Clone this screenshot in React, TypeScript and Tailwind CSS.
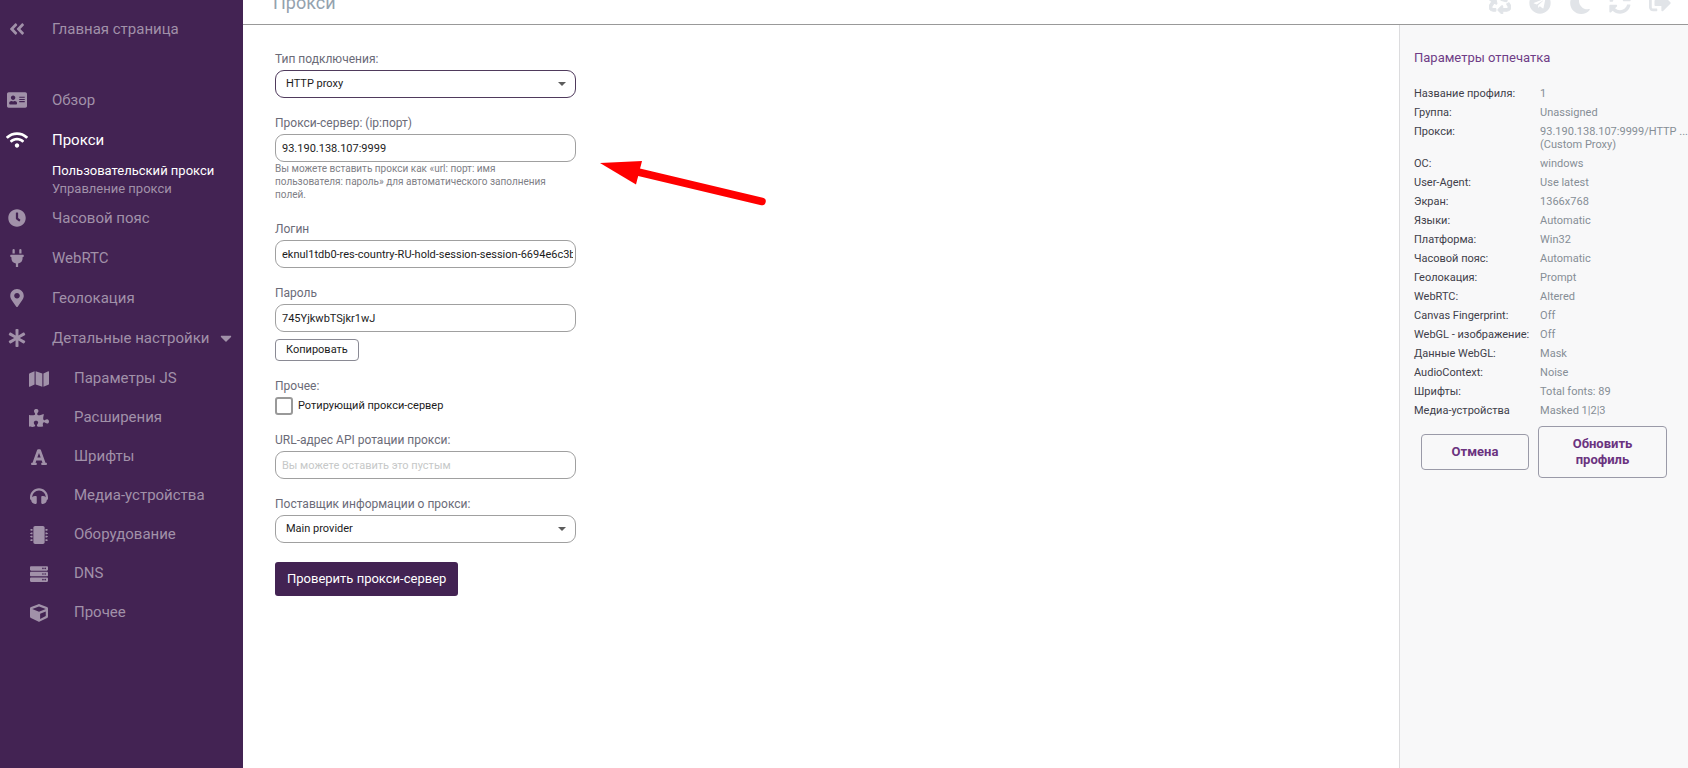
import { useState } from 'react';
import type { ReactNode } from 'react';
import type { IconType } from 'react-icons';
import {
  FaAddressCard,
  FaAngleDoubleLeft,
  FaAsterisk,
  FaCaretDown,
  FaClock,
  FaCube,
  FaFont,
  FaHeadphones,
  FaMap,
  FaMapMarkerAlt,
  FaMicrochip,
  FaMoon,
  FaPlug,
  FaPuzzlePiece,
  FaRecycle,
  FaServer,
  FaSignOutAlt,
  FaSyncAlt,
  FaTelegram,
  FaWifi,
} from 'react-icons/fa';

const subItems: { icon: IconType; label: string; wide?: boolean }[] = [
  { icon: FaMap, label: 'Параметры JS', wide: true },
  { icon: FaPuzzlePiece, label: 'Расширения', wide: true },
  { icon: FaFont, label: 'Шрифты' },
  { icon: FaHeadphones, label: 'Медиа-устройства' },
  { icon: FaMicrochip, label: 'Оборудование' },
  { icon: FaServer, label: 'DNS' },
  { icon: FaCube, label: 'Прочее' },
];

const fingerprint: [string, string[]][] = [
  ['Название профиля:', ['1']],
  ['Группа:', ['Unassigned']],
  ['Прокси:', ['93.190.138.107:9999/HTTP ...', '(Custom Proxy)']],
  ['ОС:', ['windows']],
  ['User-Agent:', ['Use latest']],
  ['Экран:', ['1366x768']],
  ['Языки:', ['Automatic']],
  ['Платформа:', ['Win32']],
  ['Часовой пояс:', ['Automatic']],
  ['Геолокация:', ['Prompt']],
  ['WebRTC:', ['Altered']],
  ['Canvas Fingerprint:', ['Off']],
  ['WebGL - изображение:', ['Off']],
  ['Данные WebGL:', ['Mask']],
  ['AudioContext:', ['Noise']],
  ['Шрифты:', ['Total fonts: 89']],
  ['Медиа-устройства', ['Masked 1|2|3']],
];

const headerActions: { icon: IconType; label: string; bold?: boolean }[] = [
  { icon: FaRecycle, label: 'Очистить', bold: true },
  { icon: FaTelegram, label: 'Telegram' },
  { icon: FaMoon, label: 'Тёмная тема' },
  { icon: FaSyncAlt, label: 'Обновить' },
  { icon: FaSignOutAlt, label: 'Выйти' },
];

function NavItem({ icon: Icon, label, active = false, wide = false, caret = false }: {
  icon: IconType;
  label: string;
  active?: boolean;
  wide?: boolean;
  caret?: boolean;
}) {
  return (
    <a
      href="#"
      className={`flex h-10 items-center whitespace-nowrap text-[15px] ${active ? 'text-white' : 'text-[#a191a9]'}`}
    >
      <span className="flex w-[34px] shrink-0 justify-center">
        <Icon className={active ? 'size-[22px]' : wide ? 'size-5' : 'size-[18px]'} />
      </span>
      <span className="ml-[18px]">{label}</span>
      {caret && <FaCaretDown className="ml-2 size-[18px]" />}
    </a>
  );
}

function Field({ id, label, children }: { id: string; label: string; children: ReactNode }) {
  return (
    <div className="flex flex-col gap-[3px]">
      <label htmlFor={id} className="text-xs leading-4 text-[#6b6b78]">
        {label}
      </label>
      {children}
    </div>
  );
}

const box = 'h-7 w-full rounded-[9px] border bg-white text-[11px] text-[#1c1c1c] outline-none';

function Input({ id, value, placeholder }: { id: string; value: string; placeholder?: string }) {
  const [text, setText] = useState(value);
  return (
    <input
      id={id}
      type="text"
      value={text}
      placeholder={placeholder}
      onChange={(e) => setText(e.target.value)}
      className={`${box} border-[#a0a0a0] pr-[2px] pl-[6px] placeholder:text-[#c6c8c8]`}
    />
  );
}

function Select({ id, option, focused = false }: { id: string; option: string; focused?: boolean }) {
  return (
    <div className="relative">
      <select
        id={id}
        className={`${box} block appearance-none pl-[10px] ${focused ? 'border-[#4f3a5c]' : 'border-[#a0a0a0]'}`}
      >
        <option>{option}</option>
      </select>
      <svg viewBox="0 0 8 4" className="pointer-events-none absolute top-3 right-[10px] h-1 w-2 fill-[#5c5c5c]">
        <path d="M0 0h8L4 4z" />
      </svg>
    </div>
  );
}

export default function App() {
  return (
    <div className="relative flex min-h-screen overflow-hidden bg-white font-[Roboto,sans-serif]">
      <nav className="w-[243px] shrink-0 bg-[#432353] pt-[9px]">
        <NavItem icon={FaAngleDoubleLeft} label="Главная страница" />
        <div className="mt-[31px]">
          <NavItem icon={FaAddressCard} label="Обзор" wide />
          <NavItem icon={FaWifi} label="Прокси" active />
          <div className="flex flex-col pt-[2px] pl-[52px] text-[13px] leading-[18px]">
            <a href="#" className="text-white">Пользовательский прокси</a>
            <a href="#" className="text-[#a191a9]">Управление прокси</a>
          </div>
          <NavItem icon={FaClock} label="Часовой пояс" />
          <NavItem icon={FaPlug} label="WebRTC" />
          <NavItem icon={FaMapMarkerAlt} label="Геолокация" />
          <NavItem icon={FaAsterisk} label="Детальные настройки" caret />
          <div className="mt-px">
            {subItems.map(({ icon: Icon, label, wide }) => (
              <a key={label} href="#" className="flex h-[39px] items-center pl-[28px] text-[15px] text-[#a191a9]">
                <span className="flex w-[22px] shrink-0 justify-center">
                  <Icon className={wide ? 'size-5' : 'size-[18px]'} />
                </span>
                <span className="ml-6">{label}</span>
              </a>
            ))}
          </div>
        </div>
      </nav>

      <div className="flex min-w-0 flex-1 flex-col">
        <header className="-mt-[9px] flex items-center justify-between border-b border-[#999999] pr-[17px] pb-[9px] pl-[30px]">
          <h1 className="text-lg leading-6 text-[#94a2ae]">Прокси</h1>
          <div className="flex gap-[18px]">
            {headerActions.map(({ icon: Icon, label, bold }) => (
              <button key={label} type="button" aria-label={label} className="-my-1 text-[#e1e4e8]">
                <Icon className={bold ? 'size-[22px] stroke-[24]' : 'size-[22px]'} />
              </button>
            ))}
          </div>
        </header>

        <div className="flex flex-1">
          <main className="flex-1 pt-[26px] pl-8">
            <form className="flex w-[301px] flex-col gap-[17px]" onSubmit={(e) => e.preventDefault()}>
              <Field id="type" label="Тип подключения:">
                <Select id="type" option="HTTP proxy" focused />
              </Field>
              <div className="pb-[3px]">
                <Field id="server" label="Прокси-сервер: (ip:порт)">
                  <Input id="server" value="93.190.138.107:9999" />
                </Field>
                <p className="text-[10px] leading-[13px] text-[#808086]">
                  Вы можете вставить прокси как «url: порт: имя
                  <br />
                  пользователя: пароль» для автоматического заполнения
                  <br />
                  полей.
                </p>
              </div>
              <Field id="login" label="Логин">
                <Input id="login" value="eknul1tdb0-res-country-RU-hold-session-session-6694e6c3bb" />
              </Field>
              <div className="flex flex-col items-stretch gap-[7px]">
                <Field id="password" label="Пароль">
                  <Input id="password" value="745YjkwbTSjkr1wJ" />
                </Field>
                <button
                  type="button"
                  className="h-[22px] self-start rounded border border-[#8a8a94] px-[10px] text-[11px] text-[#1c1c1c]"
                >
                  Копировать
                </button>
              </div>
              <Field id="rotating" label="Прочее:">
                <label className="flex items-center gap-[5px] text-[11px] text-[#1c1c1c]">
                  <input
                    id="rotating"
                    type="checkbox"
                    className="size-[18px] appearance-none rounded-[3px] border-2 border-[#999999] bg-white"
                  />
                  Ротирующий прокси-сервер
                </label>
              </Field>
              <Field id="api" label="URL-адрес API ротации прокси:">
                <Input id="api" value="" placeholder="Вы можете оставить это пустым" />
              </Field>
              <Field id="provider" label="Поставщик информации о прокси:">
                <Select id="provider" option="Main provider" />
              </Field>
              <button
                type="submit"
                className="mt-[2px] h-[34px] self-start rounded-[3px] bg-[#432353] px-3 text-[13px] text-white"
              >
                Проверить прокси-сервер
              </button>
            </form>
          </main>

          <aside className="w-[289px] shrink-0 border-l border-[#dcdcde] bg-[#f8f8f9] pt-[23px] pl-[14px]">
            <h2 className="text-[13px] leading-5 text-[#6f3d87]">Параметры отпечатка</h2>
            <table className="mt-4 text-left text-[11px] leading-[13px]">
              <tbody>
                {fingerprint.map(([name, lines]) => (
                  <tr key={name} className="align-top">
                    <th scope="row" className="w-[127px] py-[3px] font-normal whitespace-nowrap text-[#40404a]">
                      {name}
                    </th>
                    <td className="py-[3px] whitespace-nowrap text-[#868e96]">
                      {lines.map((line) => (
                        <div key={line}>{line}</div>
                      ))}
                    </td>
                  </tr>
                ))}
              </tbody>
            </table>
            <div className="mt-[6px] ml-[7px] flex items-center gap-[9px] text-[13px] leading-4 font-bold text-[#6b3380]">
              <button type="button" className="h-9 w-[108px] rounded border border-[#9a9aa8]">
                Отмена
              </button>
              <button type="button" className="h-[52px] w-[129px] rounded border border-[#9a9aa8] px-8">
                Обновить профиль
              </button>
            </div>
          </aside>
        </div>
      </div>

      <svg
        viewBox="0 0 200 80"
        aria-hidden="true"
        className="pointer-events-none absolute top-[140px] left-[580px] h-20 w-[200px]"
      >
        <path d="M58 32 182 61.500" stroke="#ff0000" strokeWidth="7.500" strokeLinecap="round" />
        <path d="M20 23 62 21 56 44.500z" fill="#ff0000" />
      </svg>
    </div>
  );
}
